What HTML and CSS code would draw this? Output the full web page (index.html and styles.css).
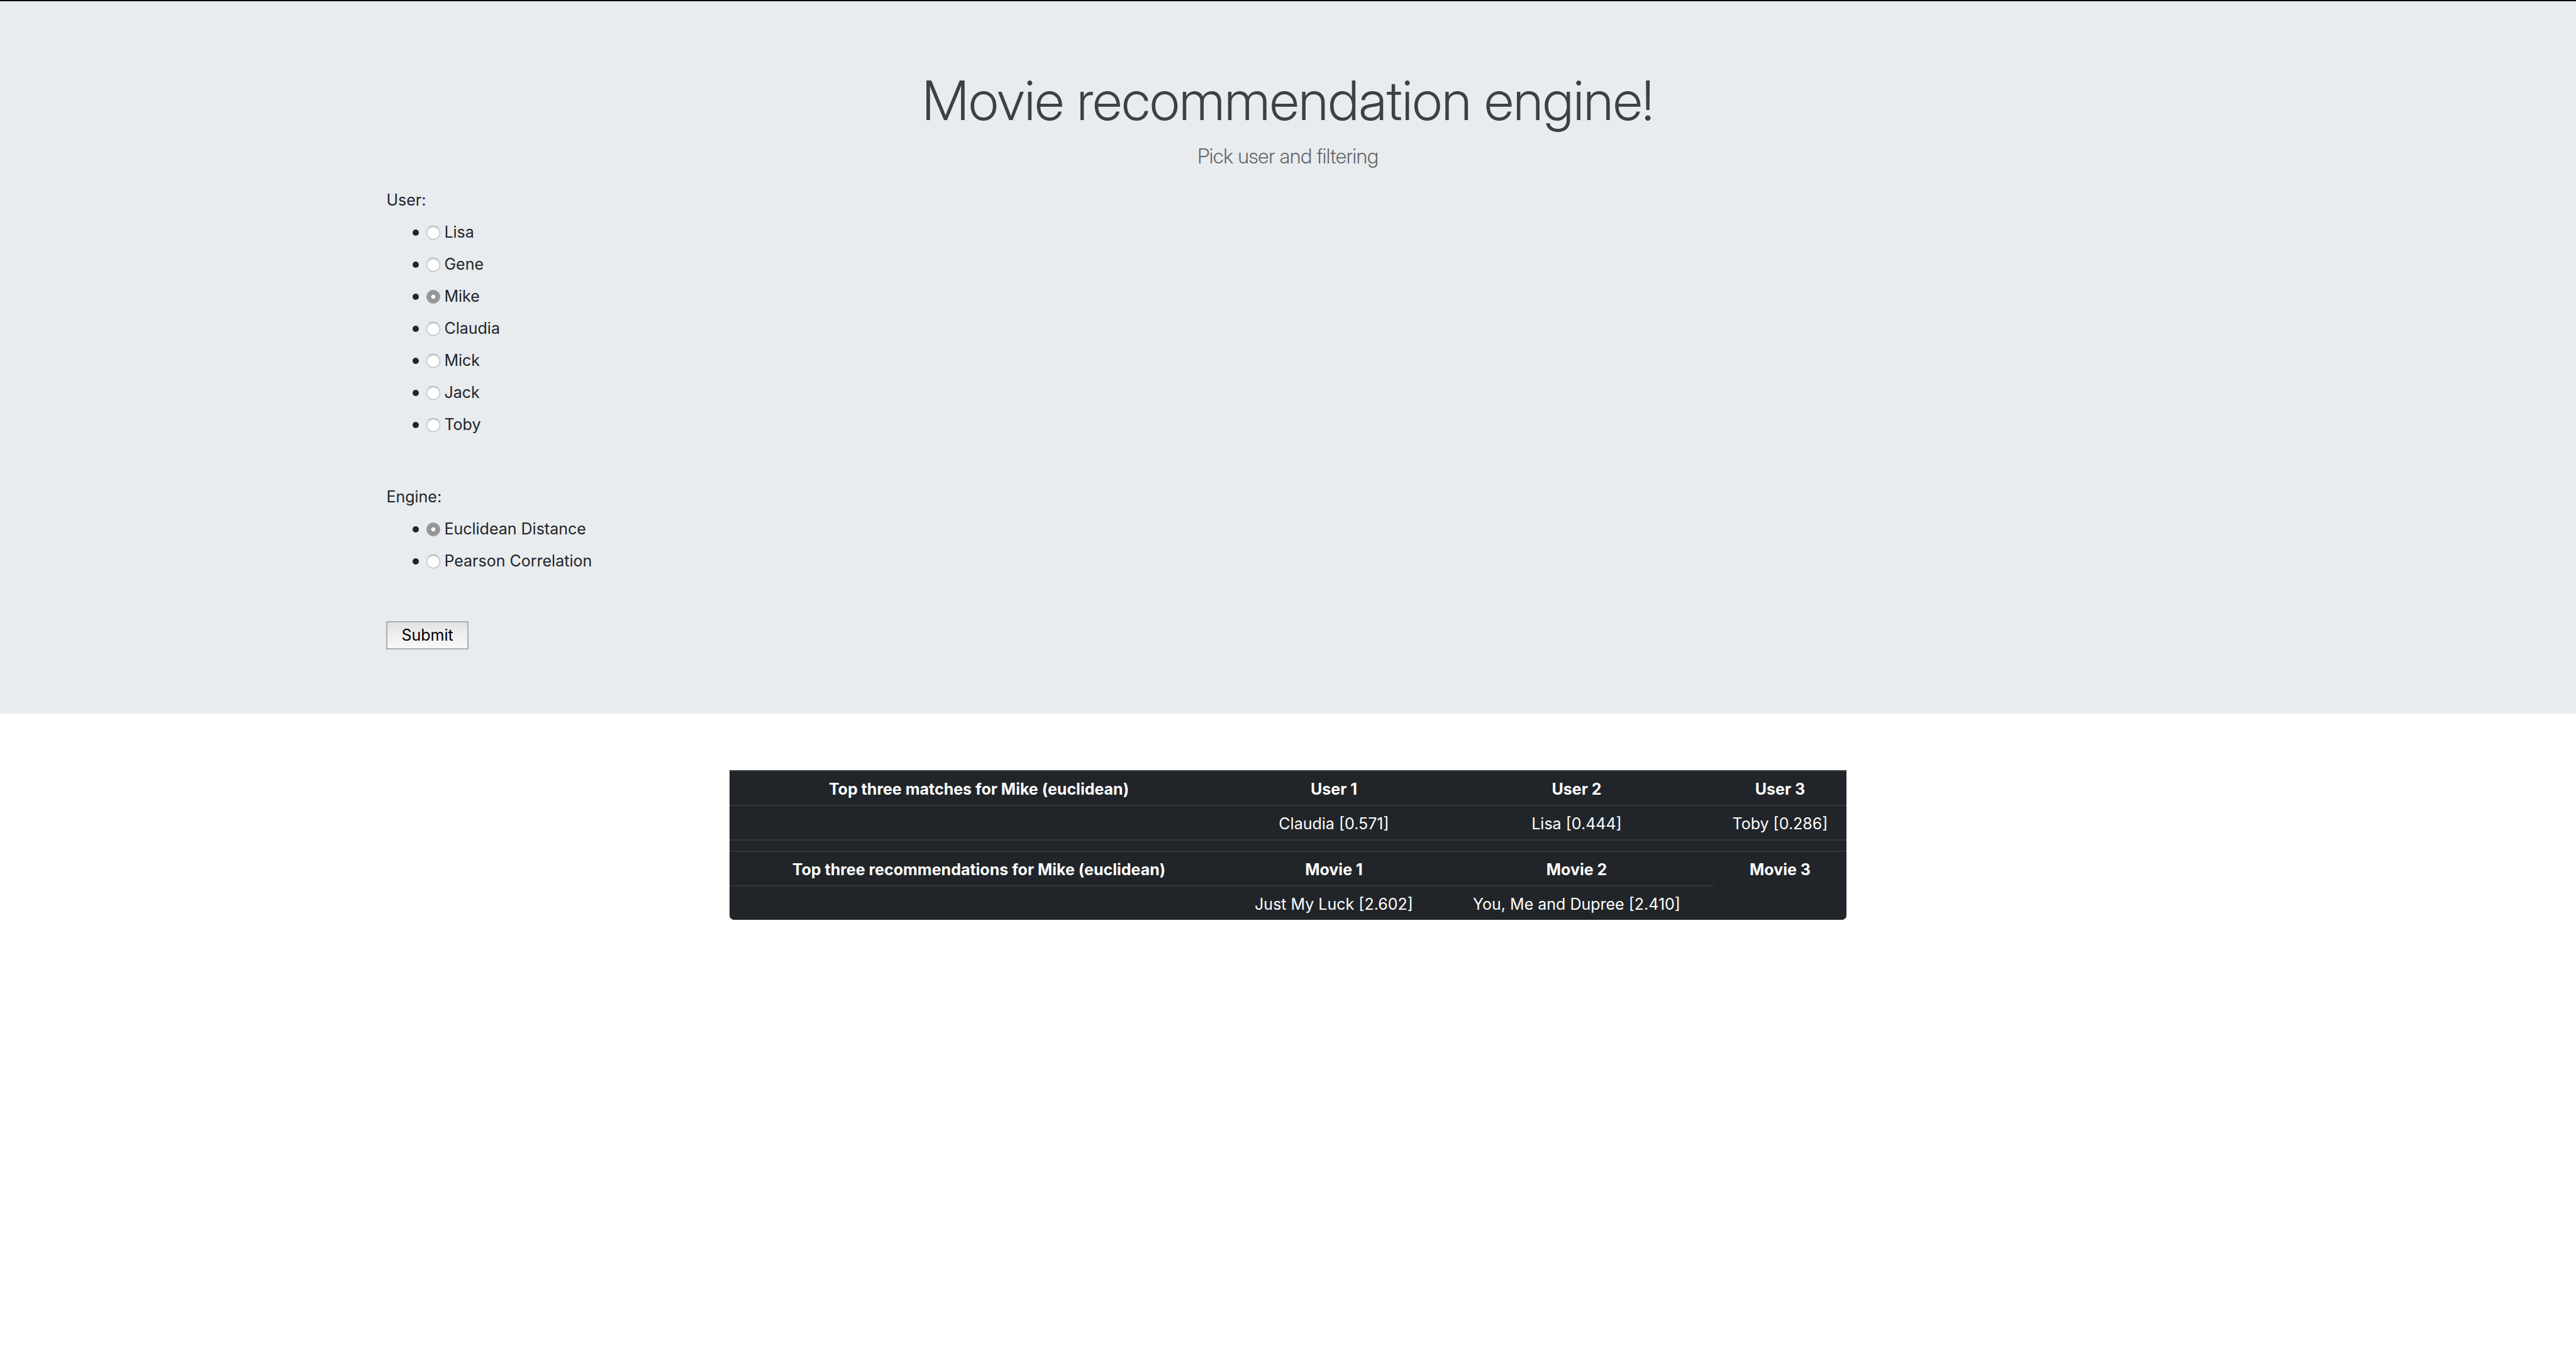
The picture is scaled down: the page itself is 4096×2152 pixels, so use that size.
FILE: index.html
```html
<!DOCTYPE html>
<html lang="en">
<head>
<meta charset="utf-8">
<title>Movie recommendation engine!</title>
<link rel="stylesheet" href="styles.css">
</head>
<body>
<header class="jumbotron">
  <div class="container">
    <h1 class="title">Movie recommendation engine!</h1>
    <p class="lead">Pick user and filtering</p>
    <form class="picker">
      <fieldset class="group">
        <legend class="group-name">User:</legend>
        <ul class="options">
          <li class="option"><input class="radio" type="radio" name="user" id="user-0"><label for="user-0">Lisa</label></li>
          <li class="option"><input class="radio" type="radio" name="user" id="user-1"><label for="user-1">Gene</label></li>
          <li class="option"><input class="radio" type="radio" name="user" id="user-2" checked><label for="user-2">Mike</label></li>
          <li class="option"><input class="radio" type="radio" name="user" id="user-3"><label for="user-3">Claudia</label></li>
          <li class="option"><input class="radio" type="radio" name="user" id="user-4"><label for="user-4">Mick</label></li>
          <li class="option"><input class="radio" type="radio" name="user" id="user-5"><label for="user-5">Jack</label></li>
          <li class="option"><input class="radio" type="radio" name="user" id="user-6"><label for="user-6">Toby</label></li>
        </ul>
      </fieldset>
      <fieldset class="group">
        <legend class="group-name">Engine:</legend>
        <ul class="options">
          <li class="option"><input class="radio" type="radio" name="engine" id="engine-0" checked><label for="engine-0">Euclidean Distance</label></li>
          <li class="option"><input class="radio" type="radio" name="engine" id="engine-1"><label for="engine-1">Pearson Correlation</label></li>
        </ul>
      </fieldset>
      <button class="submit" type="submit">Submit</button>
    </form>
  </div>
</header>
<main class="results">
  <table class="matches">
    <colgroup>
      <col class="col-label">
      <col class="col-first">
      <col class="col-second">
      <col class="col-third">
    </colgroup>
    <tbody>
      <tr><th scope="row">Top three matches for Mike (euclidean)</th><th>User 1</th><th>User 2</th><th>User 3</th></tr>
      <tr><td></td><td>Claudia [0.571]</td><td>Lisa [0.444]</td><td>Toby [0.286]</td></tr>
      <tr class="spacer"><td colspan="4"></td></tr>
      <tr><th scope="row">Top three recommendations for Mike (euclidean)</th><th>Movie 1</th><th>Movie 2</th><th>Movie 3</th></tr>
      <tr><td></td><td>Just My Luck [2.602]</td><td>You, Me and Dupree [2.410]</td></tr>
    </tbody>
  </table>
</main>
</body>
</html>
```
FILE: styles.css
```css
*, *::before, *::after { box-sizing: border-box; }

body {
  margin: 0;
  background: #fff;
  color: #212529;
  font: 400 25px/39px Inter, "Liberation Sans", sans-serif;
}

.jumbotron {
  padding: 102px 0;
  border-top: 2px solid #0c0a08;
  background: #e8ecef;
}

.container {
  width: 70%;
  margin: 0 auto;
}

.title {
  margin: 0 0 9px;
  color: #3e4042;
  font-family: "Inter Display", Roboto, sans-serif;
  font-size: 87px;
  font-weight: 350;
  line-height: 112px;
  text-align: center;
}

.lead {
  margin: 0 0 26px;
  color: #626568;
  font-family: "Inter Display", Roboto, sans-serif;
  font-size: 32px;
  font-weight: 300;
  line-height: 48px;
  text-align: center;
}

.picker {
  display: flex;
  flex-direction: column;
  align-items: flex-start;
}

.group {
  min-width: 0;
  margin: 0 0 76px;
  padding: 0;
  border: 0;
}

.group-name {
  margin-bottom: 12px;
  padding: 0;
}

.options {
  display: flex;
  flex-direction: column;
  gap: 12px;
  margin: 0;
  padding: 0 0 0 42px;
  list-style: none;
}

.option {
  display: flex;
  align-items: center;
}

.option::before {
  content: "";
  width: 10px;
  height: 10px;
  margin-right: 12px;
  border-radius: 50%;
  background: #212529;
}

.radio {
  appearance: none;
  width: 22px;
  height: 22px;
  margin: 0 6px 0 0;
  border: 1px solid #b4b5b7;
  border-top-color: #98999b;
  border-radius: 50%;
  background: #fff;
  box-shadow: inset 0 2px 2px #e4e4e4;
}

.radio:checked {
  border-color: #98969b;
  background: radial-gradient(circle, #fff 3px, #88868b 4px, #98969b 6px);
  box-shadow: none;
}

.submit {
  height: 45px;
  padding: 0 22px;
  border: 2px solid #acacac;
  border-radius: 0;
  background: linear-gradient(#e2e2e2, #ededed 40%, #f8f8f8);
  color: #000;
  font: inherit;
}

.results {
  padding: 90px 0;
}

.matches {
  width: 43.36%;
  margin: 0 auto;
  border-spacing: 0;
  border-radius: 0 0 7px 7px;
  table-layout: fixed;
  background: #212529;
  color: #fff;
  text-align: center;
}

.col-label { width: 44.65%; }
.col-first { width: 18.92%; }
.col-second { width: 24.55%; }
.col-third { width: 11.88%; }

.matches th,
.matches td {
  height: 55px;
  padding: 9px 0 5px;
  border-top: 2px solid #32383e;
}

.matches th { font-weight: 700; }

.matches .spacer td {
  height: 18px;
  padding: 0;
}
```
